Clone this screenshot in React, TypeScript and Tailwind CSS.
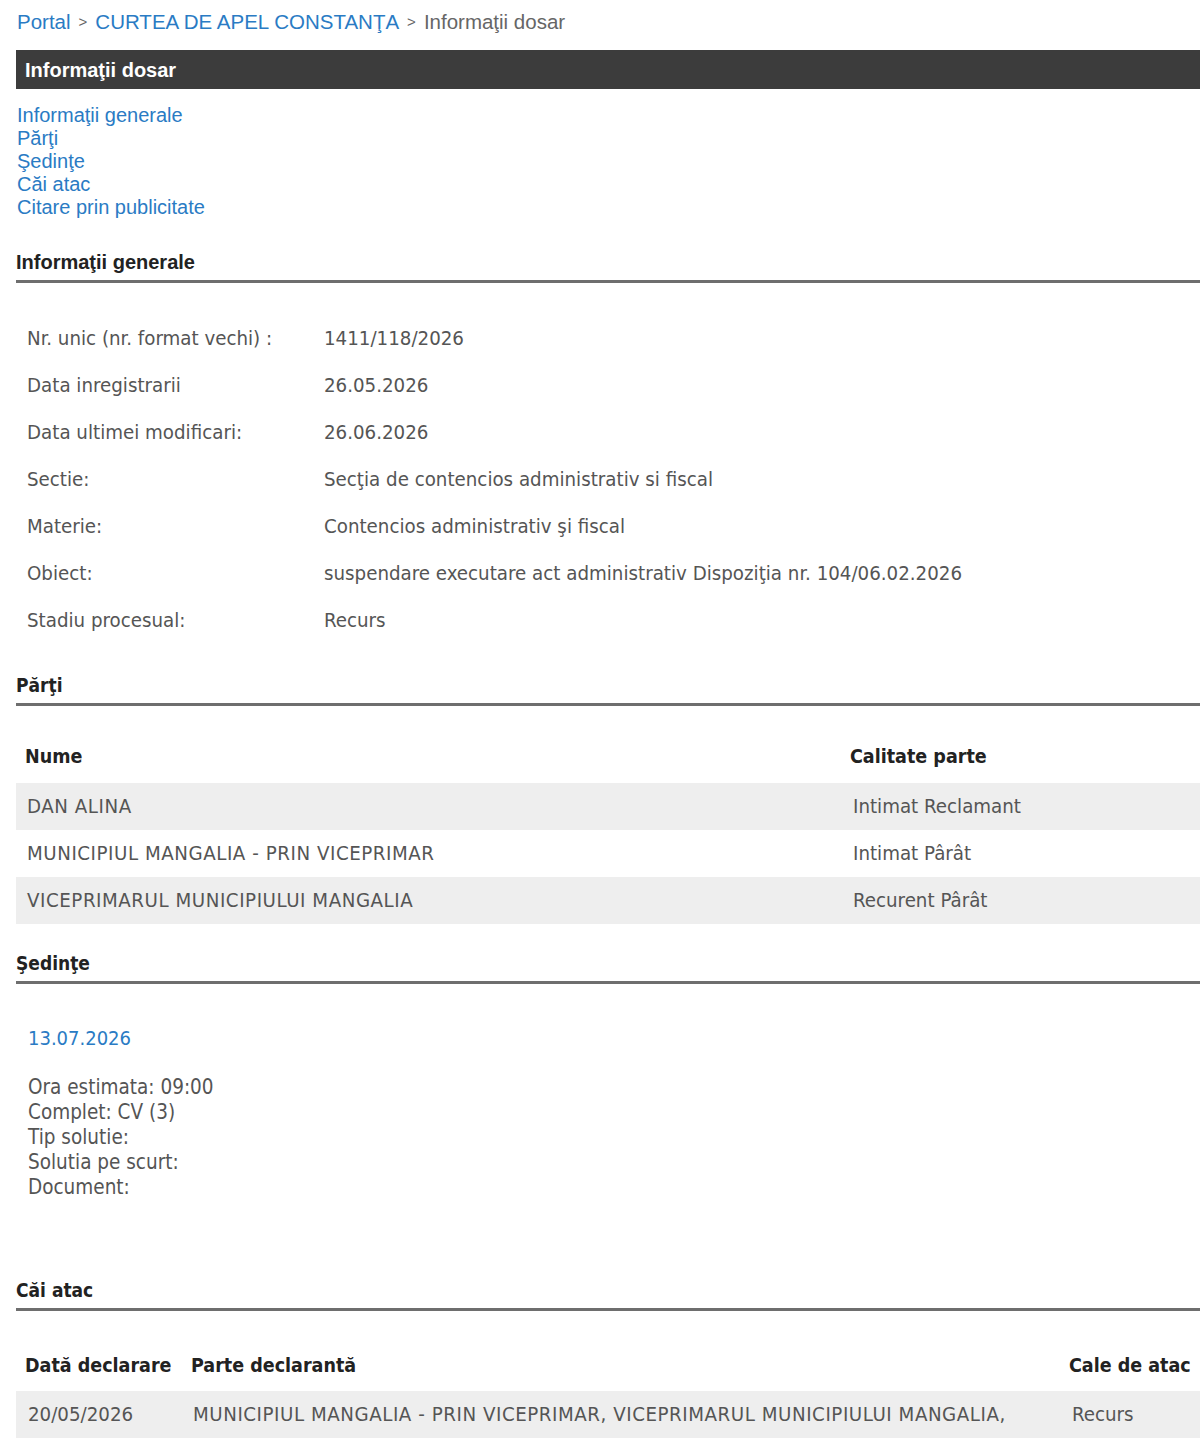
import React from 'react';

const arial = { fontFamily: '"Liberation Sans", Arial, sans-serif' };

const generalInfo = [
  ['Nr. unic (nr. format vechi) :', '1411/118/2026'],
  ['Data inregistrarii', '26.05.2026'],
  ['Data ultimei modificari:', '26.06.2026'],
  ['Sectie:', 'Secţia de contencios administrativ si fiscal'],
  ['Materie:', 'Contencios administrativ şi fiscal'],
  ['Obiect:', 'suspendare executare act administrativ Dispoziţia nr. 104/06.02.2026'],
  ['Stadiu procesual:', 'Recurs'],
];

const parti = [
  ['DAN ALINA', 'Intimat Reclamant'],
  ['MUNICIPIUL MANGALIA - PRIN VICEPRIMAR', 'Intimat Pârât'],
  ['VICEPRIMARUL MUNICIPIULUI MANGALIA', 'Recurent Pârât'],
];

const anchors = ['Informaţii generale', 'Părţi', 'Şedinţe', 'Căi atac', 'Citare prin publicitate'];

const SectionTitle = ({ children, sans }: { children: React.ReactNode; sans?: boolean }) => (
  <div className="border-b-[3px] border-[#6e6e6e] pb-[6px]">
    <h2
      className={sans ? 'text-[20px] font-bold leading-[24px] text-[#222]' : 'text-[19px] font-bold leading-[24px] text-[#222]'}
      style={sans ? arial : undefined}
    >
      {children}
    </h2>
  </div>
);

export default function App() {
  return (
    <div
      className="min-h-[1454px] w-[1200px] overflow-hidden bg-white pl-4 text-[#555]"
      style={{ fontFamily: '"DejaVu Sans Condensed", "DejaVu Sans", sans-serif' }}
    >
      <div className="flex items-center gap-[8px] pt-[10px] pl-[1px] text-[20.5px] leading-[24px]" style={arial}>
        <a className="text-[#2a7bc4]">Portal</a>
        <span className="text-[15px] text-[#666]">&gt;</span>
        <a className="text-[#2a7bc4]">CURTEA DE APEL CONSTANŢA</a>
        <span className="text-[15px] text-[#666]">&gt;</span>
        <span className="text-[#666]">Informaţii dosar</span>
      </div>

      <div className="mt-[16px] flex h-[39px] items-center bg-[#3c3c3c] pl-[9px] text-[20px] font-bold text-white" style={arial}>
        Informaţii dosar
      </div>

      <nav className="mt-[15px] flex flex-col pl-[1px] text-[20px] leading-[23px]" style={arial}>
        {anchors.map((a) => (
          <a key={a} className="w-fit text-[#2a7bc4]">
            {a}
          </a>
        ))}
      </nav>

      <div className="mt-[31px]">
        <SectionTitle sans>Informaţii generale</SectionTitle>
      </div>

      <table className="mt-[40px] border-collapse text-[20.3px]">
        <tbody>
          {generalInfo.map(([k, v]) => (
            <tr key={k} className="h-[47px] align-top">
              <td className="w-[308px] pl-[11px]">{k}</td>
              <td>{v}</td>
            </tr>
          ))}
        </tbody>
      </table>

      <div className="mt-[21px]">
        <SectionTitle>Părţi</SectionTitle>
      </div>

      <table className="mt-[25px] w-[1200px] border-collapse text-[20.3px]">
        <thead>
          <tr className="h-[52px] text-left text-[19.5px]">
            <th className="w-[834px] pl-[9px] font-bold text-[#222]">Nume</th>
            <th className="font-bold text-[#222]">Calitate parte</th>
          </tr>
        </thead>
        <tbody>
          {parti.map(([n, c], i) => (
            <tr key={n} className={i % 2 === 0 ? 'h-[47px] bg-[#eeeeee]' : 'h-[47px]'}>
              <td className="pl-[11px] tracking-[0.55px]">{n}</td>
              <td className="pl-[3px]">{c}</td>
            </tr>
          ))}
        </tbody>
      </table>

      <div className="mt-[27px]">
        <SectionTitle>Şedinţe</SectionTitle>
      </div>

      <div className="mt-[41px] pl-[12px]">
        <div className="text-[20px] leading-[26px] text-[#2a7bc4]">13.07.2026</div>
        <div className="mt-[24px] text-[20.5px] leading-[25px]">
          <div>Ora estimata: 09:00</div>
          <div>Complet: CV (3)</div>
          <div>Tip solutie:</div>
          <div>Solutia pe scurt:</div>
          <div>Document:</div>
        </div>
      </div>

      <div className="mt-[78px]">
        <SectionTitle>Căi atac</SectionTitle>
      </div>

      <table className="mt-[29px] w-[1200px] border-collapse text-[20.3px]">
        <thead>
          <tr className="h-[51px] text-left text-[19.5px]">
            <th className="w-[175px] pl-[9px] font-bold text-[#222]">Dată declarare</th>
            <th className="w-[878px] font-bold text-[#222]">Parte declarantă</th>
            <th className="font-bold text-[#222]">Cale de atac</th>
          </tr>
        </thead>
        <tbody>
          <tr className="h-[47px] bg-[#eeeeee]">
            <td className="pl-[12px]">20/05/2026</td>
            <td className="pl-[2px] tracking-[0.55px]">MUNICIPIUL MANGALIA - PRIN VICEPRIMAR, VICEPRIMARUL MUNICIPIULUI MANGALIA,</td>
            <td className="pl-[3px]">Recurs</td>
          </tr>
        </tbody>
      </table>
    </div>
  );
}
